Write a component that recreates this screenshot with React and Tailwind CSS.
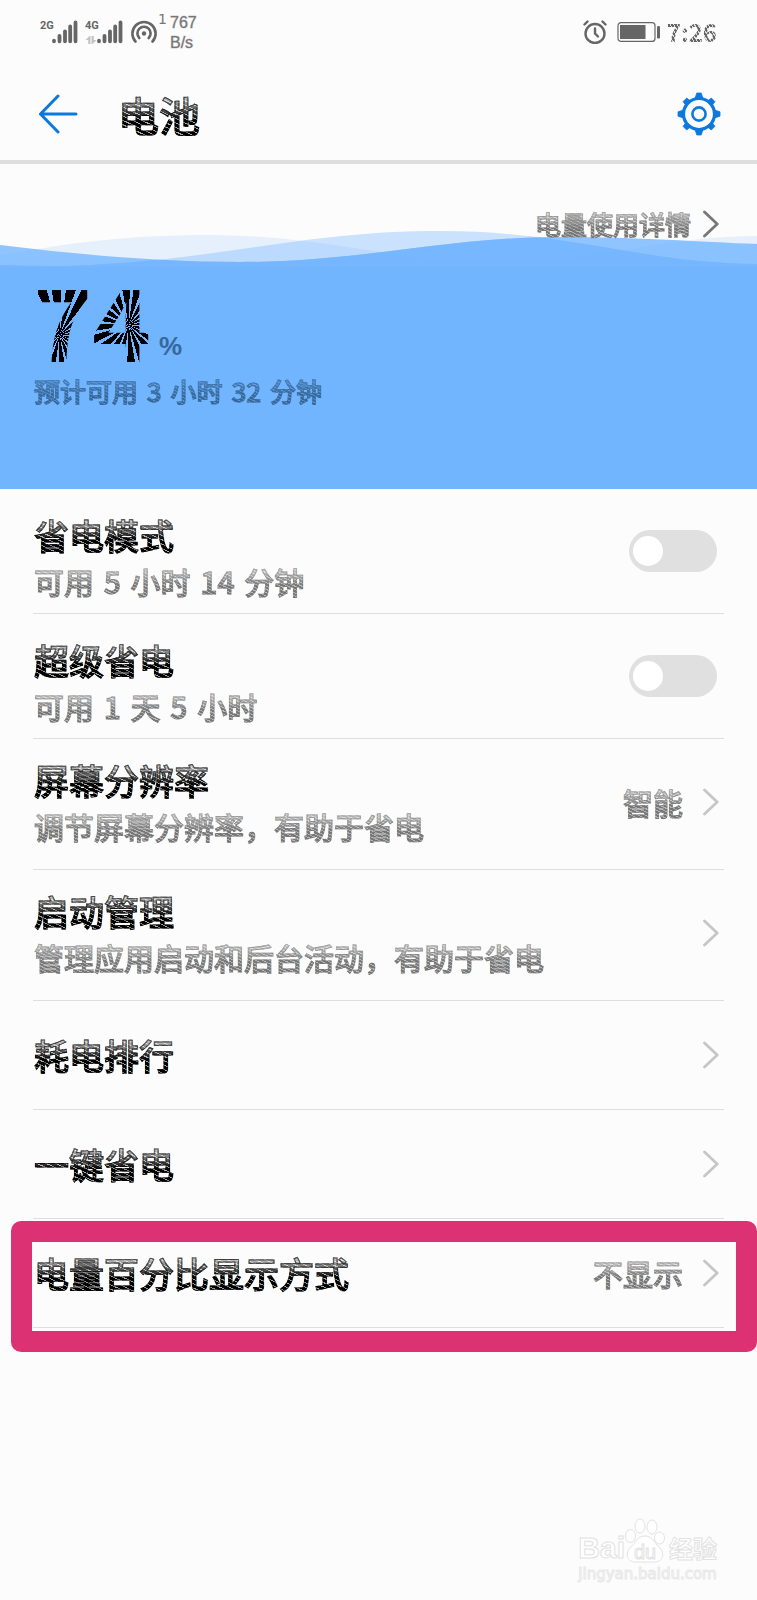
import React, { useState } from 'react';

// Engraved lettering: hatched fill, fading out towards the top
const HATCH_BLACK =
  'bg-clip-text text-transparent [-webkit-text-stroke:1px_#000000b0] bg-[linear-gradient(180deg,#fcfcfcd0_20%,#fcfcfc00_60%),repeating-linear-gradient(25deg,#000_0_3px,#aaa_3px_4px)]';
const HATCH_GRAY =
  'bg-clip-text text-transparent [-webkit-text-stroke:1px_#77777788] bg-[linear-gradient(180deg,#fcfcfcc0_20%,#fcfcfc00_60%),repeating-linear-gradient(25deg,#777_0_2px,#bbb_2px_3px)]';
const HATCH_BLUE =
  'bg-clip-text text-transparent [-webkit-text-stroke:1px_#37689aa0] bg-[linear-gradient(180deg,#71b4ffa0_20%,#71b4ff00_60%),repeating-linear-gradient(25deg,#37689a_0_2px,#5a93cf_2px_3px)]';

const Chevron = ({ className }) => (
  <svg viewBox="0 0 16 28" className={`h-7 w-4 shrink-0 ${className}`} fill="none" stroke="currentColor" strokeWidth="2.8" strokeLinecap="round" strokeLinejoin="round" aria-hidden="true">
    <path d="M1.500 2 14.200 14 1.500 26" />
  </svg>
);

const Num = ({ children }) => <span className="mx-[3px]">{children}</span>;

const Signal = ({ label, arrows }) => (
  <div className="flex items-start">
    <div className="flex w-3 flex-col gap-1">
      <span className="font-['Roboto'] text-[11px] leading-3 font-bold">{label}</span>
      {arrows && (
        <svg viewBox="0 0 12 8" className="h-2 w-3 text-[#c4c4c4]" fill="currentColor" aria-hidden="true">
          <path d="M5.500 0v8H3.200V4H.5L4.500 0zM6.500 8V0h2.300v4h2.700L7.500 8z" />
        </svg>
      )}
    </div>
    <svg viewBox="0 0 26 24" className="h-6 w-[26px]" stroke="currentColor" strokeWidth="3.8" strokeLinecap="round" aria-hidden="true">
      <path d="M2 21.300v-.6M7.500 21.300v-5.500M13 21.300v-10M18.200 21.300V6.500M23.500 21.300V2.500" />
    </svg>
  </div>
);

const StatusBar = () => (
  <div className="flex h-16 items-center justify-between pr-10 pl-10 text-[#666]">
    <div className="flex items-center">
      <Signal label="2G" />
      <div className="w-[7px]" />
      <Signal label="4G" arrows />
      <svg viewBox="0 0 26 24" className="ml-2 h-6 w-[26px]" fill="none" stroke="currentColor" strokeWidth="2.600" strokeLinecap="round" aria-hidden="true">
        <path d="M4.500 21.500A11.600 11.600 0 1 1 21.500 21.500" />
        <path d="M8.300 18A6.600 6.600 0 1 1 17.700 18" />
        <circle cx="13" cy="13.500" r="2.200" fill="currentColor" stroke="none" />
      </svg>
      <span className="w-[13px] self-start pl-px font-['DejaVu_Sans'] text-sm leading-4 text-[#777]">1</span>
      <span className="pt-0.5 font-['Liberation_Sans'] text-base leading-5 text-[#777] [-webkit-text-stroke:1px_#77777760]">
        767
        <br />
        B/s
      </span>
    </div>
    <div className="flex items-center">
      <svg viewBox="0 0 24 24" className="h-6 w-6" fill="none" stroke="currentColor" strokeWidth="2.4" strokeLinecap="round" aria-hidden="true">
        <circle cx="12" cy="13.500" r="9.500" />
        <path d="M12 8.500v5l3 3M1.500 4.500l3-3M22.500 4.500l-3-3" />
      </svg>
      <svg viewBox="0 0 44 20" className="ml-2.5 h-5 w-11" fill="none" aria-hidden="true">
        <rect x="1" y=".6" width="37" height="18.800" rx="3" stroke="currentColor" strokeWidth="1.200" />
        <path d="M3 3h25.500v14H3z" fill="currentColor" />
        <rect x="40" y="4" width="3" height="12.500" rx="1.200" fill="currentColor" />
      </svg>
      <span className="ml-1.5 bg-[repeating-linear-gradient(60deg,#666_0_2px,#ddd_2px_3px)] bg-clip-text text-2xl leading-8 font-bold text-transparent">7:26</span>
    </div>
  </div>
);

const Header = () => (
  <header className="flex h-[100px] items-center border-b-4 border-[#dedede] pt-1 pr-9 pl-[38px] text-[#0d78dd]">
    <button type="button" aria-label="返回">
      <svg viewBox="0 0 40 40" className="h-10 w-10" fill="none" stroke="currentColor" strokeWidth="3" strokeLinecap="round" strokeLinejoin="round">
        <path d="M20 2 2.500 20 20 38M2.500 20H38" />
      </svg>
    </button>
    <h1 className={`ml-10 text-[41px] leading-[60px] font-medium ${HATCH_BLACK}`}>电池</h1>
    <button type="button" aria-label="设置" className="ml-auto">
      <svg viewBox="-22 -22 44 44" className="h-11 w-11" fill="none" stroke="currentColor">
        <circle r="15.500" strokeWidth="3.200" />
        <circle r="6.600" strokeWidth="2.600" />
        {[0, 45, 90, 135, 180, 225, 270, 315].map((deg) => (
          <path
            key={deg}
            d={deg % 90 === 0 ? 'M-4-15.500-2.200-21H2.200L4-15.500z' : 'M-3-16-2.500-20H2.500L3-16z'}
            transform={`rotate(${deg})`}
            fill="currentColor"
            strokeWidth=".8"
          />
        ))}
      </svg>
    </button>
  </header>
);

const FRONT = 'M0 81C75 90 155 98 240 98C360 98 450 73 560 73C640 73 700 78 757 80V325H0Z';
const MIDDLE = 'M0 101C35 102 70 103 105 100C230 93 310 67 440 67C570 67 640 99 757 100V325H0Z';
const BACK = 'M0 92C60 80 125 71 205 71C330 71 390 98 500 98C610 98 650 73 757 72V325H0Z';

const Waves = () => (
  <svg viewBox="0 0 757 325" preserveAspectRatio="none" className="col-start-1 row-start-1 h-full w-full" fill="#71b4ff" aria-hidden="true">
    <clipPath id="front">
      <path d={FRONT} />
    </clipPath>
    <path d={BACK} opacity=".16" />
    <path d={MIDDLE} opacity=".36" />
    <path d={FRONT} opacity=".78" />
    <path d={MIDDLE} clipPath="url(#front)" opacity=".7" />
    <path d="M0 103H757V325H0Z" />
  </svg>
);

const BatteryLevel = () => (
  <section className="grid">
    <Waves />
    <div className="col-start-1 row-start-1 h-[325px] pt-10 pr-[38px] pl-[33px]">
      <a href="#usage" className="flex items-center justify-end gap-3 text-[26px] leading-10 font-medium text-[#777]">
        <span className={HATCH_GRAY}>电量使用详情</span>
        <Chevron className="text-[#777]" />
      </a>
      <div className="mt-[25px] flex items-end gap-2 font-bold">
        <div className="flex text-[100px] leading-[100px] text-transparent">
          <span className="bg-[repeating-conic-gradient(from_8deg_at_45%_66%,#000_0deg_12deg,#71b4ff_12deg_18deg)] bg-clip-text">7</span>
          <span className="bg-[repeating-conic-gradient(from_8deg_at_62%_56%,#000_0deg_12deg,#71b4ff_12deg_18deg)] bg-clip-text">4</span>
        </div>
        <span className="pb-[11px] font-['Liberation_Sans'] text-[26px] leading-6 text-[#37689a]">%</span>
      </div>
      <p className={`w-fit pl-px text-[26px] leading-11 font-medium ${HATCH_BLUE}`}>
        预计可用 <Num>3</Num> 小时 <Num>32</Num> 分钟
      </p>
    </div>
  </section>
);

const ROW = 'flex w-full items-center border-b border-[#dedede] pl-px text-left font-medium';
const TITLE = `block w-fit text-[35px] leading-12 ${HATCH_BLACK}`;
const NOTE = `block w-fit text-3xl leading-11 ${HATCH_GRAY}`;

const SwitchRow = ({ id, title, children }) => {
  const [on, setOn] = useState(false);

  return (
    <div className={`${ROW} justify-between pr-[7px]`}>
      <label htmlFor={id} className="pt-[22px] pb-[10px]">
        <span className={TITLE}>{title}</span>
        <span className={NOTE}>{children}</span>
      </label>
      <input
        id={id}
        type="checkbox"
        role="switch"
        checked={on}
        onChange={(e) => setOn(e.target.checked)}
        className="flex h-[42px] w-[88px] shrink-0 appearance-none items-center rounded-full bg-[#e0e0e0] px-1 before:h-[30px] before:w-[30px] before:rounded-full before:bg-white checked:justify-end checked:bg-[#0d78dd]"
      />
    </div>
  );
};

const LinkRow = ({ title, note, value, highlighted }) => (
  <div className="relative">
    <button type="button" className={`${ROW} pr-[5px] ${note ? 'h-[131px] pb-1' : 'h-[109px]'}`}>
      <span className="mr-auto">
        <span className={TITLE}>{title}</span>
        {note && <span className={NOTE}>{note}</span>}
      </span>
      {value && <span className={`mr-5 ${NOTE}`}>{value}</span>}
      <Chevron className="text-[#c6c6c6]" />
    </button>
    {highlighted && (
      <div className="pointer-events-none absolute top-0.5 -right-[33px] -bottom-6 -left-[22px] rounded-[10px] border-[21px] border-[#dc3274]" />
    )}
  </div>
);

const OUTLINE = 'text-white [-webkit-text-stroke:1px_#e2e2e2]';

const Watermark = () => (
  <footer className="mt-auto mr-10 mb-4 self-end font-bold">
    <div className="flex items-end">
      <span className={`font-['Liberation_Sans'] text-3xl leading-8 ${OUTLINE}`}>Bai</span>
      <div className="grid h-12 w-10 place-items-center">
        <svg viewBox="0 0 40 48" className="col-start-1 row-start-1 h-12 w-10" fill="#fff" stroke="#e2e2e2" aria-hidden="true">
          <ellipse cx="5.500" cy="20" rx="5" ry="6.500" />
          <ellipse cx="15" cy="10" rx="5" ry="7" />
          <ellipse cx="27" cy="11" rx="5" ry="7" />
          <ellipse cx="34.500" cy="22" rx="5" ry="6" />
          <path d="M20 20C12 20 11 27 6 31C0 36 1 46 11 46C16 46 24 46 29 46C39 46 40 36 34 31C29 27 28 20 20 20Z" />
        </svg>
        <span className={`col-start-1 row-start-1 mt-6 font-['Liberation_Sans'] text-xl leading-5 font-normal ${OUTLINE}`}>du</span>
      </div>
      <span className={`pl-1 text-2xl leading-8 ${OUTLINE}`}>经验</span>
    </div>
    <p className="font-['DejaVu_Sans'] text-[15px] leading-5 font-normal text-white [-webkit-text-stroke:1px_#e8e8e8]">jingyan.baidu.com</p>
  </footer>
);

const App = () => (
  <div className="flex min-h-screen flex-col overflow-hidden bg-[#fcfcfc] font-['Noto_Sans_CJK_SC',sans-serif]">
    <StatusBar />
    <Header />
    <BatteryLevel />
    <main className="px-[33px]">
      <SwitchRow id="saving" title="省电模式">
        可用 <Num>5</Num> 小时 <Num>14</Num> 分钟
      </SwitchRow>
      <SwitchRow id="ultra" title="超级省电">
        可用 <Num>1</Num> 天 <Num>5</Num> 小时
      </SwitchRow>
      <LinkRow title="屏幕分辨率" note="调节屏幕分辨率，有助于省电" value="智能" />
      <LinkRow title="启动管理" note="管理应用启动和后台活动，有助于省电" />
      <LinkRow title="耗电排行" />
      <LinkRow title="一键省电" />
      <LinkRow title="电量百分比显示方式" value="不显示" highlighted />
    </main>
    <Watermark />
  </div>
);

export default App;
